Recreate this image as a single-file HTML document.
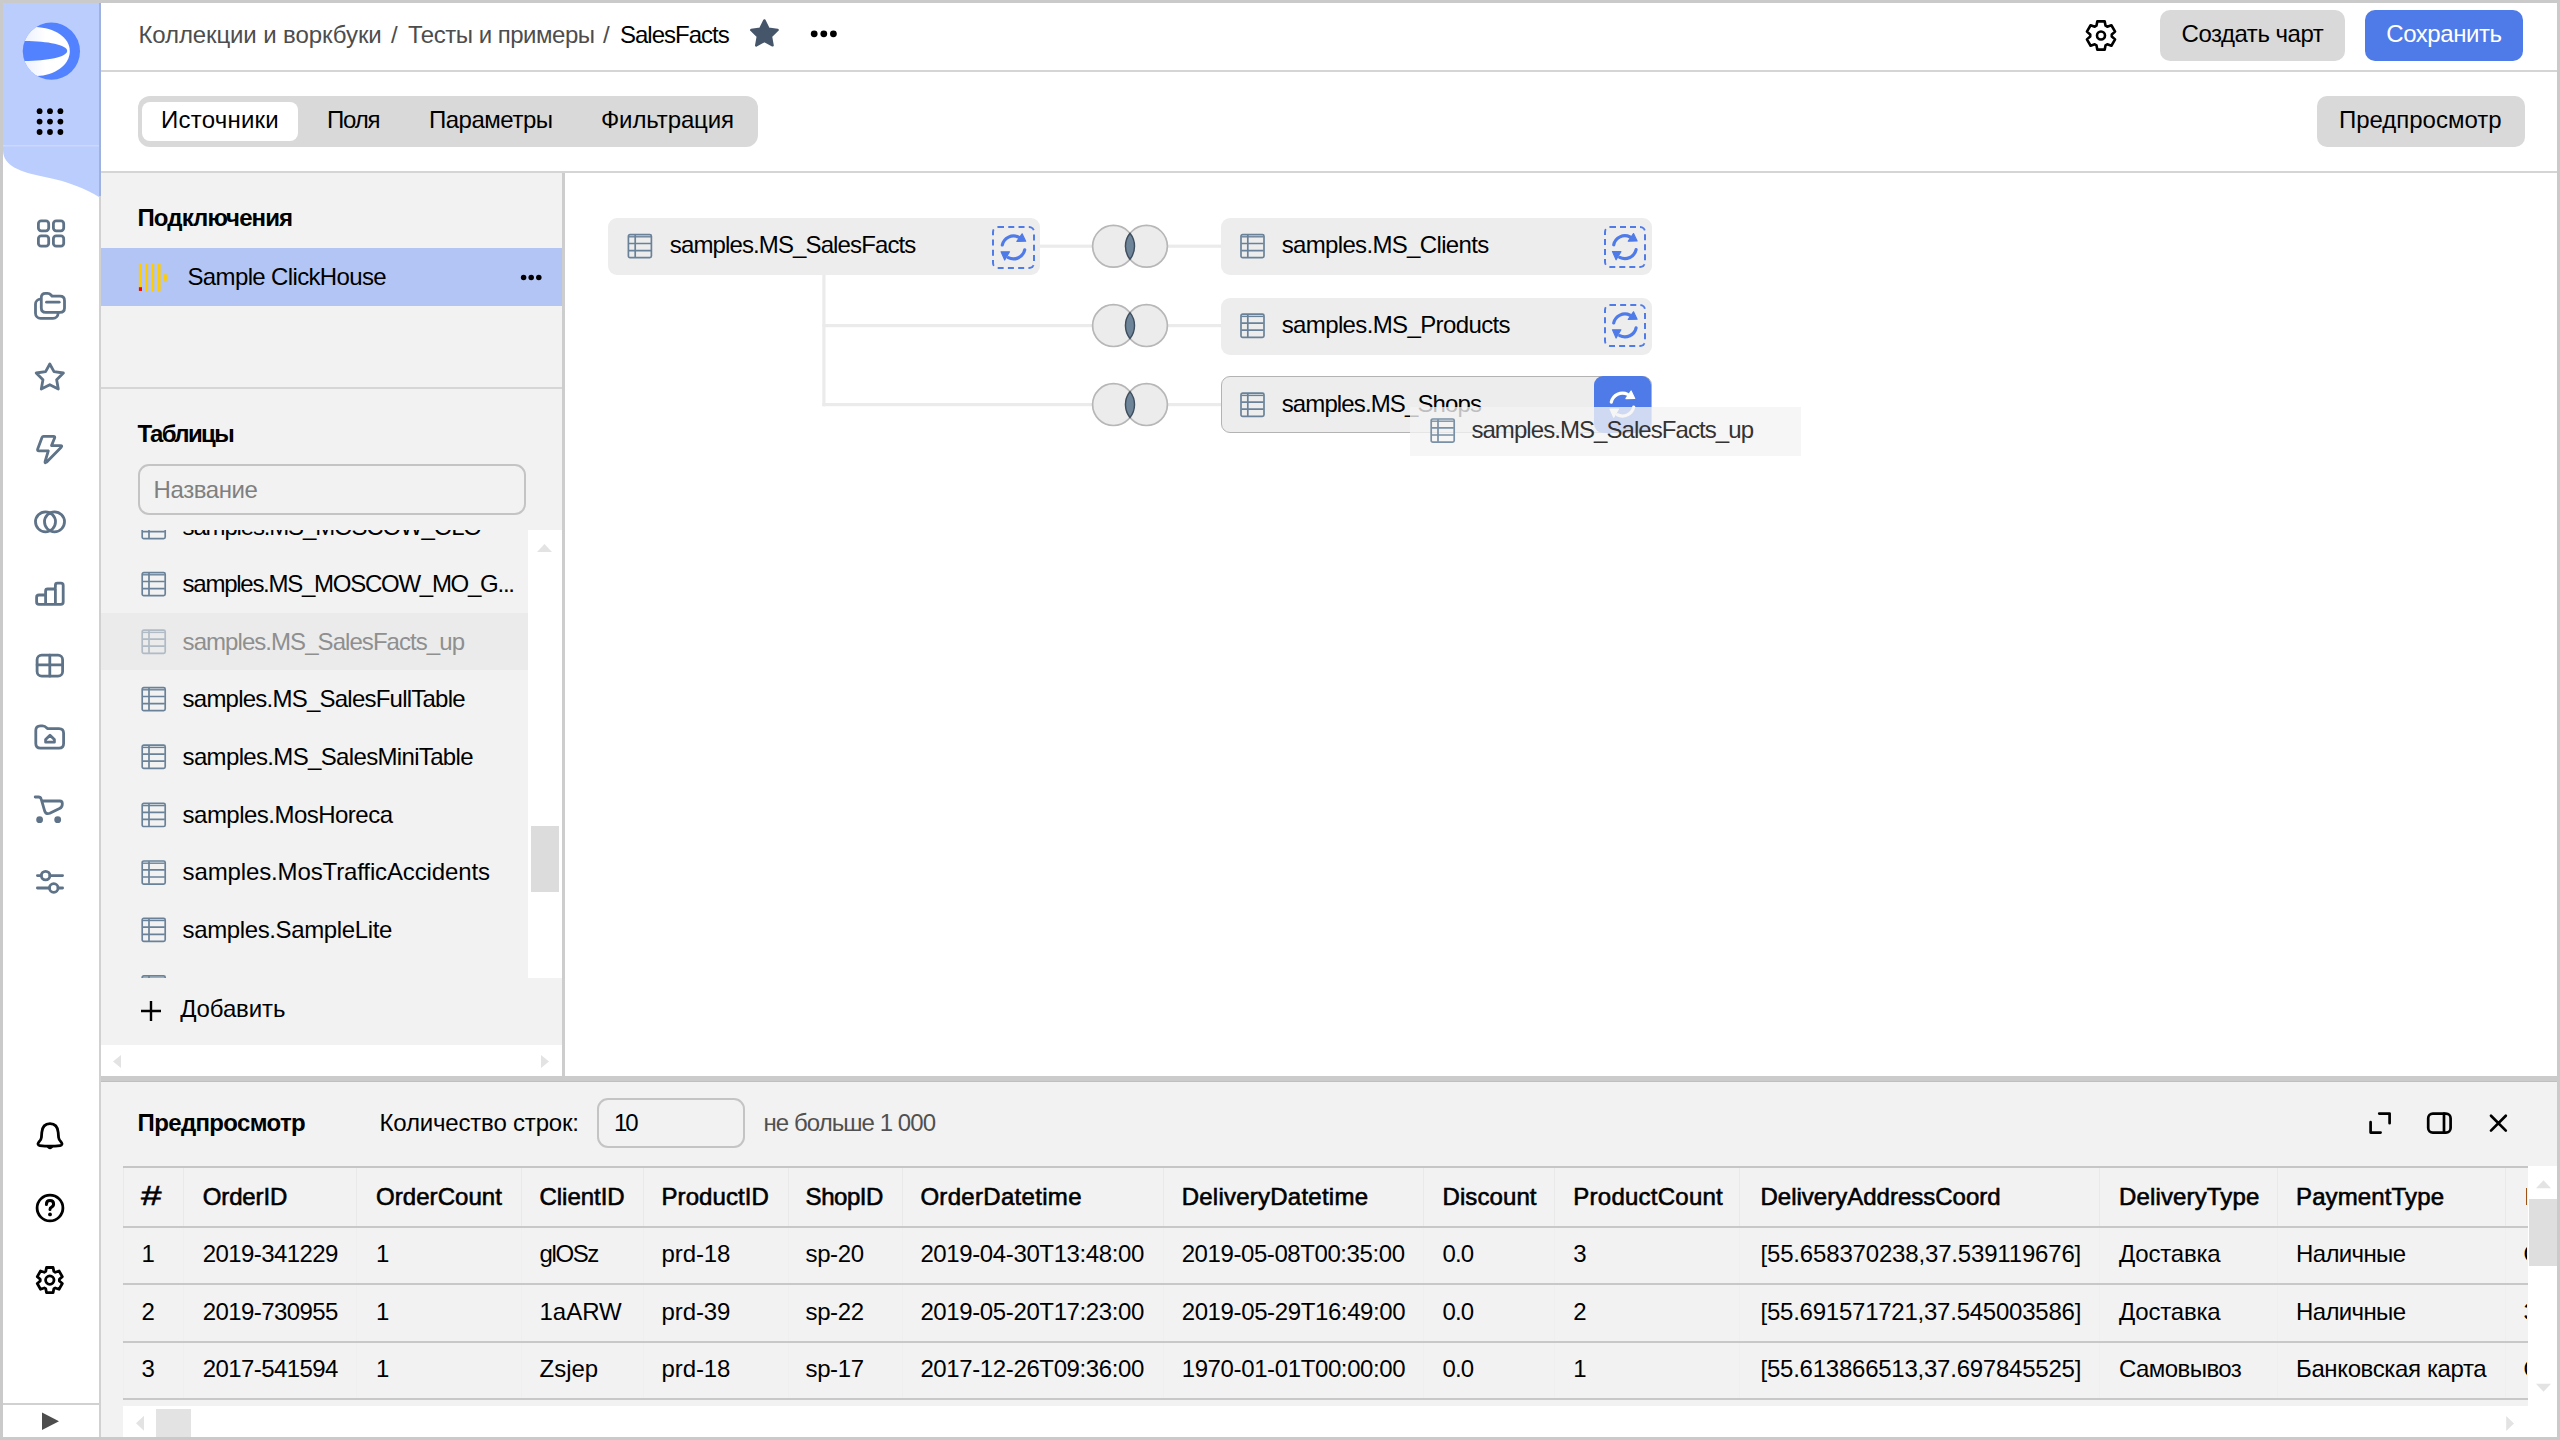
<!DOCTYPE html>
<html><head><meta charset="utf-8"><title>DataLens</title>
<style>
*{box-sizing:border-box;margin:0;padding:0}
html,body{width:2560px;height:1440px;overflow:hidden;background:#cacaca;font-family:"Liberation Sans",sans-serif;color:#000}
.a{position:absolute}
.t{position:absolute;white-space:nowrap}
svg{position:absolute;overflow:visible}
</style></head><body>
<div class="a" style="left:3px;top:3px;width:2554px;height:1434px;background:#fff;"></div>
<svg style="left:0;top:0" width="2560" height="1440" viewBox="0 0 2560 1440">
  <path d="M3 3 H99 V197 C86 189 70 182 45 177 C20 172 3 166 3 150 Z" fill="#bbcdfd"/>
  <rect x="3" y="145" width="96" height="1.5" fill="#cbd7fd"/>
  <rect x="99" y="3" width="2" height="195" fill="#9fb1dd"/>
  <rect x="99" y="196" width="2" height="1241" fill="#d1d1d1"/>
  <rect x="3" y="1403" width="96" height="2" fill="#d1d1d1"/>
  <defs>
    <clipPath id="lc"><circle cx="51.4" cy="51.2" r="28.6"/></clipPath>
    
    <linearGradient id="lg" x1="0" x2="1" y1="0" y2="0"><stop offset="0" stop-color="#dfe7ff"/><stop offset="0.6" stop-color="#fff"/></linearGradient>
  </defs>
  <circle cx="51.4" cy="51.2" r="28.6" fill="#5282ff"/>
  <g clip-path="url(#lc)">
    <path d="M35.6 27 C54 27.6 69.8 37 69.8 51.2 C69.8 65.4 54 75.4 36.8 76 L10 76 L10 27 Z" fill="url(#lg)"/>
    <path d="M18 41.1 C44 40.2 67.2 44.6 67.2 50.9 C67.2 57.2 44 61.6 18 60.8 Z" fill="#5282ff"/>
  </g>
  <g fill="#000">
    <circle cx="39.6" cy="111.2" r="2.9"/><circle cx="50" cy="111.2" r="2.9"/><circle cx="60.4" cy="111.2" r="2.9"/>
    <circle cx="39.6" cy="121.6" r="2.9"/><circle cx="50" cy="121.6" r="2.9"/><circle cx="60.4" cy="121.6" r="2.9"/>
    <circle cx="39.6" cy="132" r="2.9"/><circle cx="50" cy="132" r="2.9"/><circle cx="60.4" cy="132" r="2.9"/>
  </g>
  <g fill="none" stroke="#5e7288" stroke-width="2.8" stroke-linejoin="round" stroke-linecap="round">
    <rect x="38.4" y="220.9" width="10.3" height="9.9" rx="2.8"/>
    <rect x="53.4" y="220.9" width="10.3" height="9.9" rx="2.8"/>
    <rect x="38.4" y="235.9" width="10.3" height="10.3" rx="2.8"/>
    <rect x="53.4" y="235.9" width="10.3" height="10.3" rx="2.8"/>

    <rect x="35.5" y="299.2" width="22.6" height="19.1" rx="5"/>
    <path d="M41.3 308 V297.5 Q41.3 293.3 45.5 293.3 H47.5 Q49.6 293.3 51 295 L52 296.2 H60 Q64.5 296.2 64.5 300.7 V308 Q64.5 312.4 60 312.4 H45.7 Q41.3 312.4 41.3 308 Z" fill="#fff"/>
    <path d="M46.5 302.2 H59.2"/>

    <path d="M49.8 364 L54.0 371.7 L63.4 373.0 L56.65 379.7 L58.3 389.0 L49.8 384.7 L41.3 389.0 L42.95 379.7 L36.2 373.0 L45.6 371.7 Z"/>

    <path d="M43.5 436.3 H53.5 Q55.3 436.3 54.6 438 L51.5 445.6 H60.5 Q62.6 445.6 61.2 447.2 L46.5 462.2 Q44.6 463.6 45.1 461.5 L48.3 450.8 H39 Q37 450.8 37.7 449 L42 437.6 Q42.5 436.3 43.5 436.3 Z"/>

    <circle cx="45.5" cy="521.8" r="10"/>
    <circle cx="54.5" cy="521.8" r="10"/>

    <path d="M39 604.3 Q36.6 604.3 36.6 601.9 V597.3 Q36.6 595 39 595 H45.6 V591 Q45.6 589 47.6 589 H53.4 Q55.4 589 55.4 587 V585.2 Q55.4 583.2 57.4 583.2 H61 Q63.2 583.2 63.2 585.4 V601.9 Q63.2 604.3 60.8 604.3 Z M45.6 595 V604.3 M55.4 589 V604.3"/>

    <rect x="37.1" y="655.1" width="25.5" height="21.1" rx="4.6"/>
    <path d="M49.8 655.1 V676.2 M37.1 664.9 H62.6"/>

    <path d="M35.8 743.5 V730.5 Q35.8 725.8 40.5 725.8 H42.5 Q45 725.8 46.6 727.8 L47.4 728.6 H59 Q63.6 728.6 63.6 733.2 V743.5 Q63.6 748.2 59 748.2 H40.5 Q35.8 748.2 35.8 743.5 Z"/>
    <path d="M45.6 742.2 V739.6 L50 735.2 L54.4 739.6 V742.2 Z"/>

    <path d="M35.2 797 H38.5 Q40.6 797 41.2 799.2 L44.8 811.3 Q46.4 814.6 49.8 813.3 L59.5 808.6 Q62.3 807.2 62.3 804.2 V803.5 Q62.3 801 59.8 801 H41.8"/>

    <path d="M37.4 875.6 H41.3 M49.9 875.6 H62.6 M37.4 888 H49.4 M58.1 888 H62.6"/>
    <circle cx="45.6" cy="875.6" r="4.3"/>
    <circle cx="53.75" cy="888" r="4.3"/>
  </g>
  <g fill="#5e7288"><circle cx="39.6" cy="819.7" r="3.4"/><circle cx="57.7" cy="819.7" r="3.4"/></g>
  <g fill="none" stroke="#000" stroke-width="2.8" stroke-linejoin="round" stroke-linecap="round">
    <path d="M50 1123.6 C55.5 1123.6 57.8 1127.5 58.2 1132.5 L58.6 1137.5 C58.8 1140 60 1141 61.4 1142.4 C62.6 1143.6 62 1145.4 60.2 1145.6 C53.5 1146.3 46.5 1146.3 39.8 1145.6 C38 1145.4 37.4 1143.6 38.6 1142.4 C40 1141 41.2 1140 41.4 1137.5 L41.8 1132.5 C42.2 1127.5 44.5 1123.6 50 1123.6 Z"/>
    <circle cx="50" cy="1208" r="12.9"/>
    <path d="M46.4 1204.4 Q46.4 1200.6 50 1200.6 Q53.6 1200.6 53.6 1204 Q53.6 1206.2 51.3 1207.3 Q50 1207.9 50 1209.4" stroke-width="3"/>
    <path d="M45.75 1271.39 L46.52 1267.52 L53.08 1267.52 L53.85 1271.39 L55.32 1272.24 L59.05 1270.97 L62.33 1276.65 L59.36 1279.25 L59.36 1280.95 L62.33 1283.55 L59.05 1289.23 L55.32 1287.96 L53.85 1288.81 L53.08 1292.68 L46.52 1292.68 L45.75 1288.81 L44.28 1287.96 L40.55 1289.23 L37.27 1283.55 L40.24 1280.95 L40.24 1279.25 L37.27 1276.65 L40.55 1270.97 L44.28 1272.24 Z"/>
    <circle cx="49.8" cy="1280.1" r="4.2"/>
  </g>
  <g fill="#000"><path d="M45.6 1145 Q50 1153.6 54.4 1145 Z"/><circle cx="50" cy="1214.4" r="1.9"/></g>
  <polygon points="42,1412.5 42,1430 59,1421.2" fill="#4d4d4d"/>
</svg>
<div class="a" style="left:101px;top:70px;width:2456px;height:2px;background:#d5d5d5;"></div>
<div class="a" style="left:101px;top:171px;width:2456px;height:2px;background:#d5d5d5;"></div>
<div class="t" style="left:138.4px;top:22.78px;font-size:24px;line-height:24px;color:#4d4d4d;letter-spacing:-0.105px;">Коллекции и воркбуки</div>
<div class="t" style="left:391.0px;top:22.78px;font-size:24px;line-height:24px;color:#4d4d4d;">/</div>
<div class="t" style="left:408.0px;top:22.78px;font-size:24px;line-height:24px;color:#4d4d4d;letter-spacing:-0.489px;">Тесты и примеры</div>
<div class="t" style="left:603.0px;top:22.78px;font-size:24px;line-height:24px;color:#4d4d4d;">/</div>
<div class="t" style="left:620.0px;top:22.78px;font-size:24px;line-height:24px;color:#000;letter-spacing:-1.002px;">SalesFacts</div>
<svg style="left:0;top:0" width="2560" height="100" viewBox="0 0 2560 100">
  <path d="M764.4 20.4 L768.6 28.8 L777.6 30 L771 36.4 L772.6 45.4 L764.4 41 L756.2 45.4 L757.8 36.4 L751.2 30 L760.2 28.8 Z" fill="#46566a" stroke="#46566a" stroke-width="2.4" stroke-linejoin="round"/>
  <circle cx="814.2" cy="33.8" r="3.4" fill="#000"/><circle cx="823.8" cy="33.8" r="3.4" fill="#000"/><circle cx="833.4" cy="33.8" r="3.4" fill="#000"/>
  <g fill="none" stroke="#000" stroke-width="2.6" stroke-linejoin="round">
    <path d="M2096.45 25.71 L2097.32 21.37 L2104.68 21.37 L2105.55 25.71 L2107.21 26.66 L2111.39 25.25 L2115.08 31.63 L2111.76 34.54 L2111.76 36.46 L2115.08 39.37 L2111.39 45.75 L2107.21 44.34 L2105.55 45.29 L2104.68 49.63 L2097.32 49.63 L2096.45 45.29 L2094.79 44.34 L2090.61 45.75 L2086.92 39.37 L2090.24 36.46 L2090.24 34.54 L2086.92 31.63 L2090.61 25.25 L2094.79 26.66 Z"/>
    <circle cx="2101" cy="35.5" r="4"/>
  </g>
</svg>
<div class="a" style="left:2160px;top:10px;width:185px;height:51px;background:#d9d9d9;border-radius:10px;"></div>
<div class="t" style="left:2181.6px;top:21.98px;font-size:24px;line-height:24px;color:#000;letter-spacing:-0.486px;">Создать чарт</div>
<div class="a" style="left:2365px;top:10px;width:158px;height:51px;background:#4f7be8;border-radius:10px;"></div>
<div class="t" style="left:2386.3px;top:21.98px;font-size:24px;line-height:24px;color:#fff;letter-spacing:-0.446px;">Сохранить</div>
<div class="a" style="left:137.5px;top:96px;width:620.5px;height:51px;background:#d9d9d9;border-radius:12px;"></div>
<div class="a" style="left:142px;top:102px;width:155.5px;height:38.6px;background:#fff;border-radius:8px;"></div>
<div class="t" style="left:161.0px;top:107.68px;font-size:24px;line-height:24px;color:#000;letter-spacing:0.236px;">Источники</div>
<div class="t" style="left:327.0px;top:107.68px;font-size:24px;line-height:24px;color:#000;letter-spacing:-1.157px;">Поля</div>
<div class="t" style="left:429.0px;top:107.68px;font-size:24px;line-height:24px;color:#000;letter-spacing:-0.492px;">Параметры</div>
<div class="t" style="left:601.0px;top:107.68px;font-size:24px;line-height:24px;color:#000;letter-spacing:-0.125px;">Фильтрация</div>
<div class="a" style="left:2317px;top:96px;width:208px;height:51px;background:#d9d9d9;border-radius:10px;"></div>
<div class="t" style="left:2339.0px;top:107.68px;font-size:24px;line-height:24px;color:#000;letter-spacing:-0.025px;">Предпросмотр</div>
<div class="a" style="left:101px;top:173px;width:461px;height:903px;background:#f2f2f2;"></div>
<div class="a" style="left:562px;top:173px;width:3px;height:903px;background:#cdcdcd;"></div>
<div class="t" style="left:137.5px;top:205.68px;font-size:24px;line-height:24px;color:#000;letter-spacing:-0.894px;font-weight:bold;">Подключения</div>
<div class="a" style="left:101px;top:248px;width:461px;height:57.5px;background:#b3c5f4;"></div>
<svg style="left:0;top:0" width="600" height="320" viewBox="0 0 600 320">
  <g fill="#ffcc00">
    <rect x="138.9" y="264" width="3.1" height="26.9" rx="0.6"/>
    <rect x="145" y="264" width="3.1" height="26.9" rx="0.6"/>
    <rect x="151.1" y="264" width="3.1" height="26.9" rx="0.6"/>
    <rect x="157.3" y="264" width="3.3" height="26.9" rx="0.6"/>
    <rect x="163.3" y="274.2" width="3.6" height="6.6" rx="0.6"/>
  </g>
  <rect x="138.9" y="287.2" width="3.1" height="3.7" fill="#ff0000"/>
  <circle cx="523.6" cy="277.6" r="2.75" fill="#000"/><circle cx="531.2" cy="277.6" r="2.75" fill="#000"/><circle cx="538.8" cy="277.6" r="2.75" fill="#000"/>
</svg>
<div class="t" style="left:187.5px;top:264.68px;font-size:24px;line-height:24px;color:#000;letter-spacing:-0.639px;">Sample ClickHouse</div>
<div class="a" style="left:101px;top:387px;width:461px;height:2px;background:#d6d6d6;"></div>
<div class="t" style="left:137.5px;top:421.68px;font-size:24px;line-height:24px;color:#000;letter-spacing:-1.611px;font-weight:bold;">Таблицы</div>
<div class="a" style="left:137.8px;top:463.8px;width:388.0px;height:51.2px;border:2px solid #c4c4c4;border-radius:11px;background:#f2f2f2;"></div>
<div class="t" style="left:153.6px;top:477.88px;font-size:24px;line-height:24px;color:#7f7f7f;letter-spacing:-0.436px;">Название</div>
<div class="a" style="left:101px;top:530px;width:427px;height:447.5px;overflow:hidden;">
<div class="a" style="left:0px;top:82.7px;width:427px;height:57.5px;background:#ebebeb;"></div>
<div class="t" style="left:81.6px;top:-14.92px;font-size:24px;line-height:24px;color:#000;letter-spacing:-1.167px;">samples.MS_MOSCOW_OLO</div>
<div class="t" style="left:81.6px;top:42.08px;font-size:24px;line-height:24px;color:#000;letter-spacing:-1.264px;">samples.MS_MOSCOW_MO_G...</div>
<div class="t" style="left:81.6px;top:99.68px;font-size:24px;line-height:24px;color:#8f8f8f;letter-spacing:-0.945px;">samples.MS_SalesFacts_up</div>
<div class="t" style="left:81.6px;top:157.08px;font-size:24px;line-height:24px;color:#000;letter-spacing:-0.770px;">samples.MS_SalesFullTable</div>
<div class="t" style="left:81.6px;top:214.68px;font-size:24px;line-height:24px;color:#000;letter-spacing:-0.659px;">samples.MS_SalesMiniTable</div>
<div class="t" style="left:81.6px;top:272.88px;font-size:24px;line-height:24px;color:#000;letter-spacing:-0.522px;">samples.MosHoreca</div>
<div class="t" style="left:81.6px;top:330.48px;font-size:24px;line-height:24px;color:#000;letter-spacing:-0.130px;">samples.MosTrafficAccidents</div>
<div class="t" style="left:81.6px;top:387.78px;font-size:24px;line-height:24px;color:#000;letter-spacing:-0.377px;">samples.SampleLite</div>
<div class="t" style="left:81.6px;top:445.38px;font-size:24px;line-height:24px;color:#000;">samples.SampleOther</div>
<svg style="left:0;top:0" width="427" height="448" viewBox="0 0 427 448"><g transform="translate(40.40 -15.20)" opacity="1.0" fill="none" stroke="#6a8299"><rect x="0.8" y="0.8" width="23" height="23.1" rx="1.6" stroke-width="1.7"/><path d="M1.2 3 H23.4" stroke-width="1.4"/><path d="M1.2 9.7 H23.4 M1.2 16.8 H23.4 M7.6 1 V23.6" stroke-width="1.7"/></g><g transform="translate(40.40 41.80)" opacity="1.0" fill="none" stroke="#6a8299"><rect x="0.8" y="0.8" width="23" height="23.1" rx="1.6" stroke-width="1.7"/><path d="M1.2 3 H23.4" stroke-width="1.4"/><path d="M1.2 9.7 H23.4 M1.2 16.8 H23.4 M7.6 1 V23.6" stroke-width="1.7"/></g><g transform="translate(40.40 99.40)" opacity="0.45" fill="none" stroke="#6a8299"><rect x="0.8" y="0.8" width="23" height="23.1" rx="1.6" stroke-width="1.7"/><path d="M1.2 3 H23.4" stroke-width="1.4"/><path d="M1.2 9.7 H23.4 M1.2 16.8 H23.4 M7.6 1 V23.6" stroke-width="1.7"/></g><g transform="translate(40.40 156.80)" opacity="1.0" fill="none" stroke="#6a8299"><rect x="0.8" y="0.8" width="23" height="23.1" rx="1.6" stroke-width="1.7"/><path d="M1.2 3 H23.4" stroke-width="1.4"/><path d="M1.2 9.7 H23.4 M1.2 16.8 H23.4 M7.6 1 V23.6" stroke-width="1.7"/></g><g transform="translate(40.40 214.40)" opacity="1.0" fill="none" stroke="#6a8299"><rect x="0.8" y="0.8" width="23" height="23.1" rx="1.6" stroke-width="1.7"/><path d="M1.2 3 H23.4" stroke-width="1.4"/><path d="M1.2 9.7 H23.4 M1.2 16.8 H23.4 M7.6 1 V23.6" stroke-width="1.7"/></g><g transform="translate(40.40 272.60)" opacity="1.0" fill="none" stroke="#6a8299"><rect x="0.8" y="0.8" width="23" height="23.1" rx="1.6" stroke-width="1.7"/><path d="M1.2 3 H23.4" stroke-width="1.4"/><path d="M1.2 9.7 H23.4 M1.2 16.8 H23.4 M7.6 1 V23.6" stroke-width="1.7"/></g><g transform="translate(40.40 330.20)" opacity="1.0" fill="none" stroke="#6a8299"><rect x="0.8" y="0.8" width="23" height="23.1" rx="1.6" stroke-width="1.7"/><path d="M1.2 3 H23.4" stroke-width="1.4"/><path d="M1.2 9.7 H23.4 M1.2 16.8 H23.4 M7.6 1 V23.6" stroke-width="1.7"/></g><g transform="translate(40.40 387.50)" opacity="1.0" fill="none" stroke="#6a8299"><rect x="0.8" y="0.8" width="23" height="23.1" rx="1.6" stroke-width="1.7"/><path d="M1.2 3 H23.4" stroke-width="1.4"/><path d="M1.2 9.7 H23.4 M1.2 16.8 H23.4 M7.6 1 V23.6" stroke-width="1.7"/></g><g transform="translate(40.40 445.10)" opacity="1.0" fill="none" stroke="#6a8299"><rect x="0.8" y="0.8" width="23" height="23.1" rx="1.6" stroke-width="1.7"/><path d="M1.2 3 H23.4" stroke-width="1.4"/><path d="M1.2 9.7 H23.4 M1.2 16.8 H23.4 M7.6 1 V23.6" stroke-width="1.7"/></g></svg>
</div>
<div class="a" style="left:101px;top:1044.8px;width:461px;height:31.2px;background:#fff;"></div>
<div class="a" style="left:528px;top:530px;width:33.5px;height:447.5px;background:#fff;"></div>
<div class="a" style="left:531px;top:826px;width:28px;height:66px;background:#dcdcdc;"></div>
<svg style="left:0;top:0" width="600" height="1100" viewBox="0 0 600 1100"><polygon points="537,552 552,552 544.5,544" fill="#e3e3e3"/><polygon points="113,1061.5 121,1055 121,1068" fill="#e3e3e3"/><polygon points="541,1055 549,1061.5 541,1068" fill="#e3e3e3"/><path d="M151 1001 V1021 M141 1011 H161" stroke="#000" stroke-width="2.4"/></svg>
<div class="t" style="left:180.2px;top:997.18px;font-size:24px;line-height:24px;color:#000;letter-spacing:-0.124px;">Добавить</div>
<svg style="left:0;top:0" width="2560" height="1100" viewBox="0 0 2560 1100"><g fill="#ebebeb"><rect x="1040" y="244.6" width="54" height="3.2"/><rect x="822.3" y="275" width="3.2" height="131.2"/><rect x="822.3" y="324" width="272" height="3.2"/><rect x="822.3" y="403" width="272" height="3.2"/><rect x="1167" y="244.6" width="54" height="3.2"/><rect x="1167" y="324" width="54" height="3.2"/><rect x="1167" y="403" width="54" height="3.2"/></g><circle cx="1113.5" cy="246.3" r="20.9" fill="#ececec" stroke="#b7b7b7" stroke-width="1.7"/><circle cx="1146.5" cy="246.3" r="20.9" fill="#ececec" stroke="#b7b7b7" stroke-width="1.7"/><path d="M1130 233.30 A20.9 20.9 0 0 1 1130 259.30 A20.9 20.9 0 0 1 1130 233.30 Z" fill="#6d8499" stroke="#3f4e5e" stroke-width="1.4"/><circle cx="1113.5" cy="325.6" r="20.9" fill="#ececec" stroke="#b7b7b7" stroke-width="1.7"/><circle cx="1146.5" cy="325.6" r="20.9" fill="#ececec" stroke="#b7b7b7" stroke-width="1.7"/><path d="M1130 312.60 A20.9 20.9 0 0 1 1130 338.60 A20.9 20.9 0 0 1 1130 312.60 Z" fill="#6d8499" stroke="#3f4e5e" stroke-width="1.4"/><circle cx="1113.5" cy="404.6" r="20.9" fill="#ececec" stroke="#b7b7b7" stroke-width="1.7"/><circle cx="1146.5" cy="404.6" r="20.9" fill="#ececec" stroke="#b7b7b7" stroke-width="1.7"/><path d="M1130 391.60 A20.9 20.9 0 0 1 1130 417.60 A20.9 20.9 0 0 1 1130 391.60 Z" fill="#6d8499" stroke="#3f4e5e" stroke-width="1.4"/></svg>
<div class="a" style="left:608px;top:217.8px;width:432px;height:57.2px;background:#ededed;border-radius:9px;"></div>
<div class="a" style="left:1221px;top:217.8px;width:431.4px;height:57.2px;background:#ededed;border-radius:9px;"></div>
<div class="a" style="left:1221px;top:297.8px;width:431.4px;height:56.8px;background:#ededed;border-radius:9px;"></div>
<div class="a" style="left:1221px;top:376px;width:431.4px;height:57px;background:#ededed;border-radius:9px;border:1.6px solid #b3b3b3;"></div>
<div class="a" style="left:992.2px;top:226.2px;width:42.6px;height:42.4px;border:2px dashed #4f7be8;border-radius:6px;"></div>
<div class="a" style="left:1603.6px;top:226px;width:42.6px;height:42.4px;border:2px dashed #4f7be8;border-radius:6px;"></div>
<div class="a" style="left:1603.6px;top:304.2px;width:42.6px;height:42.4px;border:2px dashed #4f7be8;border-radius:6px;"></div>
<div class="a" style="left:1594px;top:376.2px;width:57px;height:56.8px;background:#4f7be8;border-radius:9px;"></div>
<svg style="left:0;top:0" width="2560" height="1100" viewBox="0 0 2560 1100"><g fill="none" stroke="#4f7be8" stroke-width="3.2" stroke-linecap="round"><path d="M1002.30 245.00 A11.5 11.5 0 0 1 1018.70 237.20"/><path d="M1024.70 249.80 A11.5 11.5 0 0 1 1008.30 257.60"/></g><g fill="#4f7be8" stroke="#4f7be8" stroke-width="1.2" stroke-linejoin="round"><polygon points="1022.10,233.80 1025.70,241.20 1016.90,241.40"/><polygon points="1001.10,251.80 1009.50,251.80 1004.70,260.00"/></g><g fill="none" stroke="#4f7be8" stroke-width="3.2" stroke-linecap="round"><path d="M1613.70 244.80 A11.5 11.5 0 0 1 1630.10 237.00"/><path d="M1636.10 249.60 A11.5 11.5 0 0 1 1619.70 257.40"/></g><g fill="#4f7be8" stroke="#4f7be8" stroke-width="1.2" stroke-linejoin="round"><polygon points="1633.50,233.60 1637.10,241.00 1628.30,241.20"/><polygon points="1612.50,251.60 1620.90,251.60 1616.10,259.80"/></g><g fill="none" stroke="#4f7be8" stroke-width="3.2" stroke-linecap="round"><path d="M1613.70 323.00 A11.5 11.5 0 0 1 1630.10 315.20"/><path d="M1636.10 327.80 A11.5 11.5 0 0 1 1619.70 335.60"/></g><g fill="#4f7be8" stroke="#4f7be8" stroke-width="1.2" stroke-linejoin="round"><polygon points="1633.50,311.80 1637.10,319.20 1628.30,319.40"/><polygon points="1612.50,329.80 1620.90,329.80 1616.10,338.00"/></g><g fill="none" stroke="#ffffff" stroke-width="3.2" stroke-linecap="round"><path d="M1611.30 402.20 A11.5 11.5 0 0 1 1627.70 394.40"/><path d="M1633.70 407.00 A11.5 11.5 0 0 1 1617.30 414.80"/></g><g fill="#ffffff" stroke="#ffffff" stroke-width="1.2" stroke-linejoin="round"><polygon points="1631.10,391.00 1634.70,398.40 1625.90,398.60"/><polygon points="1610.10,409.00 1618.50,409.00 1613.70,417.20"/></g><g transform="translate(627.60 233.80)" opacity="1.0" fill="none" stroke="#6a8299"><rect x="0.8" y="0.8" width="23" height="23.1" rx="1.6" stroke-width="1.7"/><path d="M1.2 3 H23.4" stroke-width="1.4"/><path d="M1.2 9.7 H23.4 M1.2 16.8 H23.4 M7.6 1 V23.6" stroke-width="1.7"/></g><g transform="translate(1240.20 233.80)" opacity="1.0" fill="none" stroke="#6a8299"><rect x="0.8" y="0.8" width="23" height="23.1" rx="1.6" stroke-width="1.7"/><path d="M1.2 3 H23.4" stroke-width="1.4"/><path d="M1.2 9.7 H23.4 M1.2 16.8 H23.4 M7.6 1 V23.6" stroke-width="1.7"/></g><g transform="translate(1240.20 313.40)" opacity="1.0" fill="none" stroke="#6a8299"><rect x="0.8" y="0.8" width="23" height="23.1" rx="1.6" stroke-width="1.7"/><path d="M1.2 3 H23.4" stroke-width="1.4"/><path d="M1.2 9.7 H23.4 M1.2 16.8 H23.4 M7.6 1 V23.6" stroke-width="1.7"/></g><g transform="translate(1240.20 392.40)" opacity="1.0" fill="none" stroke="#6a8299"><rect x="0.8" y="0.8" width="23" height="23.1" rx="1.6" stroke-width="1.7"/><path d="M1.2 3 H23.4" stroke-width="1.4"/><path d="M1.2 9.7 H23.4 M1.2 16.8 H23.4 M7.6 1 V23.6" stroke-width="1.7"/></g></svg>
<div class="t" style="left:669.8px;top:233.38px;font-size:24px;line-height:24px;color:#000;letter-spacing:-0.880px;">samples.MS_SalesFacts</div>
<div class="t" style="left:1281.7px;top:233.38px;font-size:24px;line-height:24px;color:#000;letter-spacing:-0.662px;">samples.MS_Clients</div>
<div class="t" style="left:1281.7px;top:312.68px;font-size:24px;line-height:24px;color:#000;letter-spacing:-0.622px;">samples.MS_Products</div>
<div class="t" style="left:1281.7px;top:391.68px;font-size:24px;line-height:24px;color:#000;letter-spacing:-0.876px;">samples.MS_Shops</div>
<div class="a" style="left:1410px;top:407px;width:391px;height:49px;background:rgba(243,243,243,0.78);"></div>
<svg style="left:0;top:0" width="2560" height="1100" viewBox="0 0 2560 1100"><g transform="translate(1430.40 418.20)" opacity="1.0" fill="none" stroke="#7a90a6"><rect x="0.8" y="0.8" width="23" height="23.1" rx="1.6" stroke-width="1.7"/><path d="M1.2 3 H23.4" stroke-width="1.4"/><path d="M1.2 9.7 H23.4 M1.2 16.8 H23.4 M7.6 1 V23.6" stroke-width="1.7"/></g></svg>
<div class="t" style="left:1471.4px;top:418.48px;font-size:24px;line-height:24px;color:#333;letter-spacing:-0.937px;">samples.MS_SalesFacts_up</div>
<div class="a" style="left:101px;top:1076px;width:2456px;height:5.5px;background:#cbcbcb;border-bottom:1.2px solid #bfbfbf;"></div>
<div class="a" style="left:101px;top:1081.5px;width:2456px;height:355.5px;background:#f2f2f2;"></div>
<div class="t" style="left:137.6px;top:1110.68px;font-size:24px;line-height:24px;color:#000;letter-spacing:-0.651px;font-weight:bold;">Предпросмотр</div>
<div class="t" style="left:379.5px;top:1110.68px;font-size:24px;line-height:24px;color:#000;letter-spacing:-0.182px;">Количество строк:</div>
<div class="a" style="left:597.3px;top:1097.6px;width:147.5px;height:50.8px;border:2px solid #c4c4c4;border-radius:11px;"></div>
<div class="t" style="left:614.0px;top:1110.68px;font-size:24px;line-height:24px;color:#000;letter-spacing:-2.000px;">10</div>
<div class="t" style="left:763.5px;top:1110.68px;font-size:24px;line-height:24px;color:#505050;letter-spacing:-0.941px;">не больше 1 000</div>
<svg style="left:0;top:0" width="2560" height="1440" viewBox="0 0 2560 1440">
<g fill="none" stroke="#000" stroke-width="2.7" stroke-linecap="round" stroke-linejoin="round">
  <path d="M2370.6 1122.2 V1132.6 H2380.6 M2379.2 1113.6 H2389.6 V1123.2"/>
  <rect x="2428.2" y="1113.6" width="22.4" height="19" rx="4.6"/>
  <path d="M2444 1113.6 V1132.6"/>
  <path d="M2491 1115.8 L2505.8 1130.6 M2505.8 1115.8 L2491 1130.6"/>
</g></svg>
<div class="a" style="left:122.5px;top:1168px;width:1.0px;height:58px;background:#e9e9e9;"></div>
<div class="a" style="left:122.5px;top:1227.6px;width:1.0px;height:170.4px;background:#efefef;"></div>
<div class="a" style="left:182.8px;top:1168px;width:1.0px;height:58px;background:#e9e9e9;"></div>
<div class="a" style="left:182.8px;top:1227.6px;width:1.0px;height:170.4px;background:#efefef;"></div>
<div class="a" style="left:356.2px;top:1168px;width:1.0px;height:58px;background:#e9e9e9;"></div>
<div class="a" style="left:356.2px;top:1227.6px;width:1.0px;height:170.4px;background:#efefef;"></div>
<div class="a" style="left:520.5px;top:1168px;width:1.0px;height:58px;background:#e9e9e9;"></div>
<div class="a" style="left:520.5px;top:1227.6px;width:1.0px;height:170.4px;background:#efefef;"></div>
<div class="a" style="left:642.5px;top:1168px;width:1.0px;height:58px;background:#e9e9e9;"></div>
<div class="a" style="left:642.5px;top:1227.6px;width:1.0px;height:170.4px;background:#efefef;"></div>
<div class="a" style="left:787.5px;top:1168px;width:1.0px;height:58px;background:#e9e9e9;"></div>
<div class="a" style="left:787.5px;top:1227.6px;width:1.0px;height:170.4px;background:#efefef;"></div>
<div class="a" style="left:901.5px;top:1168px;width:1.0px;height:58px;background:#e9e9e9;"></div>
<div class="a" style="left:901.5px;top:1227.6px;width:1.0px;height:170.4px;background:#efefef;"></div>
<div class="a" style="left:1162.5px;top:1168px;width:1.0px;height:58px;background:#e9e9e9;"></div>
<div class="a" style="left:1162.5px;top:1227.6px;width:1.0px;height:170.4px;background:#efefef;"></div>
<div class="a" style="left:1422.5px;top:1168px;width:1.0px;height:58px;background:#e9e9e9;"></div>
<div class="a" style="left:1422.5px;top:1227.6px;width:1.0px;height:170.4px;background:#efefef;"></div>
<div class="a" style="left:1553.9px;top:1168px;width:1.0px;height:58px;background:#e9e9e9;"></div>
<div class="a" style="left:1553.9px;top:1227.6px;width:1.0px;height:170.4px;background:#efefef;"></div>
<div class="a" style="left:1739.1px;top:1168px;width:1.0px;height:58px;background:#e9e9e9;"></div>
<div class="a" style="left:1739.1px;top:1227.6px;width:1.0px;height:170.4px;background:#efefef;"></div>
<div class="a" style="left:2099.2px;top:1168px;width:1.0px;height:58px;background:#e9e9e9;"></div>
<div class="a" style="left:2099.2px;top:1227.6px;width:1.0px;height:170.4px;background:#efefef;"></div>
<div class="a" style="left:2277.3px;top:1168px;width:1.0px;height:58px;background:#e9e9e9;"></div>
<div class="a" style="left:2277.3px;top:1227.6px;width:1.0px;height:170.4px;background:#efefef;"></div>
<div class="a" style="left:2504.7px;top:1168px;width:1.0px;height:58px;background:#e9e9e9;"></div>
<div class="a" style="left:2504.7px;top:1227.6px;width:1.0px;height:170.4px;background:#efefef;"></div>
<div class="a" style="left:123px;top:1166px;width:2405px;height:2px;background:#c6c6c6;"></div>
<div class="a" style="left:123px;top:1226px;width:2405px;height:1.6px;background:#c8c8c8;"></div>
<div class="a" style="left:123px;top:1283px;width:2405px;height:1.6px;background:#c8c8c8;"></div>
<div class="a" style="left:123px;top:1341px;width:2405px;height:1.6px;background:#c8c8c8;"></div>
<div class="a" style="left:123px;top:1398.2px;width:2405px;height:1.6px;background:#c8c8c8;"></div>
<div class="t" style="left:141.0px;top:1181.79px;font-size:28px;line-height:28px;color:#000;-webkit-text-stroke:0.5px #000;transform:scaleX(1.32);transform-origin:0 0;">#</div>
<div class="t" style="left:202.7px;top:1184.58px;font-size:24px;line-height:24px;color:#000;letter-spacing:-0.108px;-webkit-text-stroke:0.6px #000;">OrderID</div>
<div class="t" style="left:376.0px;top:1184.58px;font-size:24px;line-height:24px;color:#000;letter-spacing:0.056px;-webkit-text-stroke:0.6px #000;">OrderCount</div>
<div class="t" style="left:539.5px;top:1184.58px;font-size:24px;line-height:24px;color:#000;letter-spacing:-0.037px;-webkit-text-stroke:0.6px #000;">ClientID</div>
<div class="t" style="left:661.5px;top:1184.58px;font-size:24px;line-height:24px;color:#000;letter-spacing:0.073px;-webkit-text-stroke:0.6px #000;">ProductID</div>
<div class="t" style="left:805.6px;top:1184.58px;font-size:24px;line-height:24px;color:#000;letter-spacing:-0.451px;-webkit-text-stroke:0.6px #000;">ShopID</div>
<div class="t" style="left:920.4px;top:1184.58px;font-size:24px;line-height:24px;color:#000;letter-spacing:0.309px;-webkit-text-stroke:0.6px #000;">OrderDatetime</div>
<div class="t" style="left:1181.7px;top:1184.58px;font-size:24px;line-height:24px;color:#000;letter-spacing:0.238px;-webkit-text-stroke:0.6px #000;">DeliveryDatetime</div>
<div class="t" style="left:1442.5px;top:1184.58px;font-size:24px;line-height:24px;color:#000;letter-spacing:0.089px;-webkit-text-stroke:0.6px #000;">Discount</div>
<div class="t" style="left:1573.3px;top:1184.58px;font-size:24px;line-height:24px;color:#000;letter-spacing:0.249px;-webkit-text-stroke:0.6px #000;">ProductCount</div>
<div class="t" style="left:1760.5px;top:1184.58px;font-size:24px;line-height:24px;color:#000;letter-spacing:-0.000px;-webkit-text-stroke:0.6px #000;">DeliveryAddressCoord</div>
<div class="t" style="left:2119.0px;top:1184.58px;font-size:24px;line-height:24px;color:#000;letter-spacing:0.144px;-webkit-text-stroke:0.6px #000;">DeliveryType</div>
<div class="t" style="left:2296.0px;top:1184.58px;font-size:24px;line-height:24px;color:#000;letter-spacing:0.125px;-webkit-text-stroke:0.6px #000;">PaymentType</div>
<div class="t" style="left:141.5px;top:1241.68px;font-size:24px;line-height:24px;color:#000;">1</div>
<div class="t" style="left:202.7px;top:1241.68px;font-size:24px;line-height:24px;color:#000;letter-spacing:-0.577px;">2019-341229</div>
<div class="t" style="left:376.0px;top:1241.68px;font-size:24px;line-height:24px;color:#000;">1</div>
<div class="t" style="left:539.5px;top:1241.68px;font-size:24px;line-height:24px;color:#000;letter-spacing:-1.389px;">glOSz</div>
<div class="t" style="left:661.5px;top:1241.68px;font-size:24px;line-height:24px;color:#000;letter-spacing:-0.096px;">prd-18</div>
<div class="t" style="left:805.6px;top:1241.68px;font-size:24px;line-height:24px;color:#000;letter-spacing:-0.409px;">sp-20</div>
<div class="t" style="left:920.4px;top:1241.68px;font-size:24px;line-height:24px;color:#000;letter-spacing:-0.381px;">2019-04-30T13:48:00</div>
<div class="t" style="left:1181.7px;top:1241.68px;font-size:24px;line-height:24px;color:#000;letter-spacing:-0.420px;">2019-05-08T00:35:00</div>
<div class="t" style="left:1442.5px;top:1241.68px;font-size:24px;line-height:24px;color:#000;letter-spacing:-0.832px;">0.0</div>
<div class="t" style="left:1573.3px;top:1241.68px;font-size:24px;line-height:24px;color:#000;">3</div>
<div class="t" style="left:1760.5px;top:1241.68px;font-size:24px;line-height:24px;color:#000;letter-spacing:-0.170px;">[55.658370238,37.539119676]</div>
<div class="t" style="left:2119.0px;top:1241.68px;font-size:24px;line-height:24px;color:#000;letter-spacing:-0.196px;">Доставка</div>
<div class="t" style="left:2296.0px;top:1241.68px;font-size:24px;line-height:24px;color:#000;letter-spacing:-0.635px;">Наличные</div>
<div class="t" style="left:141.5px;top:1299.68px;font-size:24px;line-height:24px;color:#000;">2</div>
<div class="t" style="left:202.7px;top:1299.68px;font-size:24px;line-height:24px;color:#000;letter-spacing:-0.577px;">2019-730955</div>
<div class="t" style="left:376.0px;top:1299.68px;font-size:24px;line-height:24px;color:#000;">1</div>
<div class="t" style="left:539.5px;top:1299.68px;font-size:24px;line-height:24px;color:#000;">1aARW</div>
<div class="t" style="left:661.5px;top:1299.68px;font-size:24px;line-height:24px;color:#000;letter-spacing:-0.096px;">prd-39</div>
<div class="t" style="left:805.6px;top:1299.68px;font-size:24px;line-height:24px;color:#000;letter-spacing:-0.409px;">sp-22</div>
<div class="t" style="left:920.4px;top:1299.68px;font-size:24px;line-height:24px;color:#000;letter-spacing:-0.381px;">2019-05-20T17:23:00</div>
<div class="t" style="left:1181.7px;top:1299.68px;font-size:24px;line-height:24px;color:#000;letter-spacing:-0.381px;">2019-05-29T16:49:00</div>
<div class="t" style="left:1442.5px;top:1299.68px;font-size:24px;line-height:24px;color:#000;letter-spacing:-0.832px;">0.0</div>
<div class="t" style="left:1573.3px;top:1299.68px;font-size:24px;line-height:24px;color:#000;">2</div>
<div class="t" style="left:1760.5px;top:1299.68px;font-size:24px;line-height:24px;color:#000;letter-spacing:-0.238px;">[55.691571721,37.545003586]</div>
<div class="t" style="left:2119.0px;top:1299.68px;font-size:24px;line-height:24px;color:#000;letter-spacing:-0.196px;">Доставка</div>
<div class="t" style="left:2296.0px;top:1299.68px;font-size:24px;line-height:24px;color:#000;letter-spacing:-0.635px;">Наличные</div>
<div class="t" style="left:141.5px;top:1357.18px;font-size:24px;line-height:24px;color:#000;">3</div>
<div class="t" style="left:202.7px;top:1357.18px;font-size:24px;line-height:24px;color:#000;letter-spacing:-0.577px;">2017-541594</div>
<div class="t" style="left:376.0px;top:1357.18px;font-size:24px;line-height:24px;color:#000;">1</div>
<div class="t" style="left:539.5px;top:1357.18px;font-size:24px;line-height:24px;color:#000;">Zsjep</div>
<div class="t" style="left:661.5px;top:1357.18px;font-size:24px;line-height:24px;color:#000;letter-spacing:-0.096px;">prd-18</div>
<div class="t" style="left:805.6px;top:1357.18px;font-size:24px;line-height:24px;color:#000;letter-spacing:-0.409px;">sp-17</div>
<div class="t" style="left:920.4px;top:1357.18px;font-size:24px;line-height:24px;color:#000;letter-spacing:-0.381px;">2017-12-26T09:36:00</div>
<div class="t" style="left:1181.7px;top:1357.18px;font-size:24px;line-height:24px;color:#000;letter-spacing:-0.381px;">1970-01-01T00:00:00</div>
<div class="t" style="left:1442.5px;top:1357.18px;font-size:24px;line-height:24px;color:#000;letter-spacing:-0.832px;">0.0</div>
<div class="t" style="left:1573.3px;top:1357.18px;font-size:24px;line-height:24px;color:#000;">1</div>
<div class="t" style="left:1760.5px;top:1357.18px;font-size:24px;line-height:24px;color:#000;letter-spacing:-0.238px;">[55.613866513,37.697845525]</div>
<div class="t" style="left:2119.0px;top:1357.18px;font-size:24px;line-height:24px;color:#000;letter-spacing:-0.570px;">Самовывоз</div>
<div class="t" style="left:2296.0px;top:1357.18px;font-size:24px;line-height:24px;color:#000;letter-spacing:-0.370px;">Банковская карта</div>
<div class="a" style="left:2505px;top:1168px;width:22px;height:230px;overflow:hidden;">
<div class="t" style="left:19.7px;top:16.58px;font-size:24px;line-height:24px;color:#000;font-weight:bold;">P</div>
<div class="t" style="left:18.5px;top:73.68px;font-size:24px;line-height:24px;color:#000;">О</div>
<div class="t" style="left:18.5px;top:131.68px;font-size:24px;line-height:24px;color:#000;">З</div>
<div class="t" style="left:18.5px;top:189.18px;font-size:24px;line-height:24px;color:#000;">О</div>
</div>
<div class="a" style="left:2528.4px;top:1166px;width:28.6px;height:240px;background:#fff;"></div>
<div class="a" style="left:2529.4px;top:1199px;width:27.6px;height:67px;background:#dedede;"></div>
<div class="a" style="left:123px;top:1406px;width:2434px;height:31px;background:#fff;"></div>
<div class="a" style="left:156px;top:1409px;width:34.8px;height:28px;background:#e3e3e3;"></div>
<svg style="left:0;top:0" width="2560" height="1440" viewBox="0 0 2560 1440"><g fill="#e3e3e3">
<polygon points="2536,1188.3 2551,1188.3 2543.5,1180.2"/>
<polygon points="2536,1383.8 2551,1383.8 2543.5,1391.8"/>
<polygon points="144,1415.7 144,1430.7 136,1423.2"/>
<polygon points="2506.2,1416 2506.2,1431 2514,1423.5"/>
</g></svg>
</body></html>
